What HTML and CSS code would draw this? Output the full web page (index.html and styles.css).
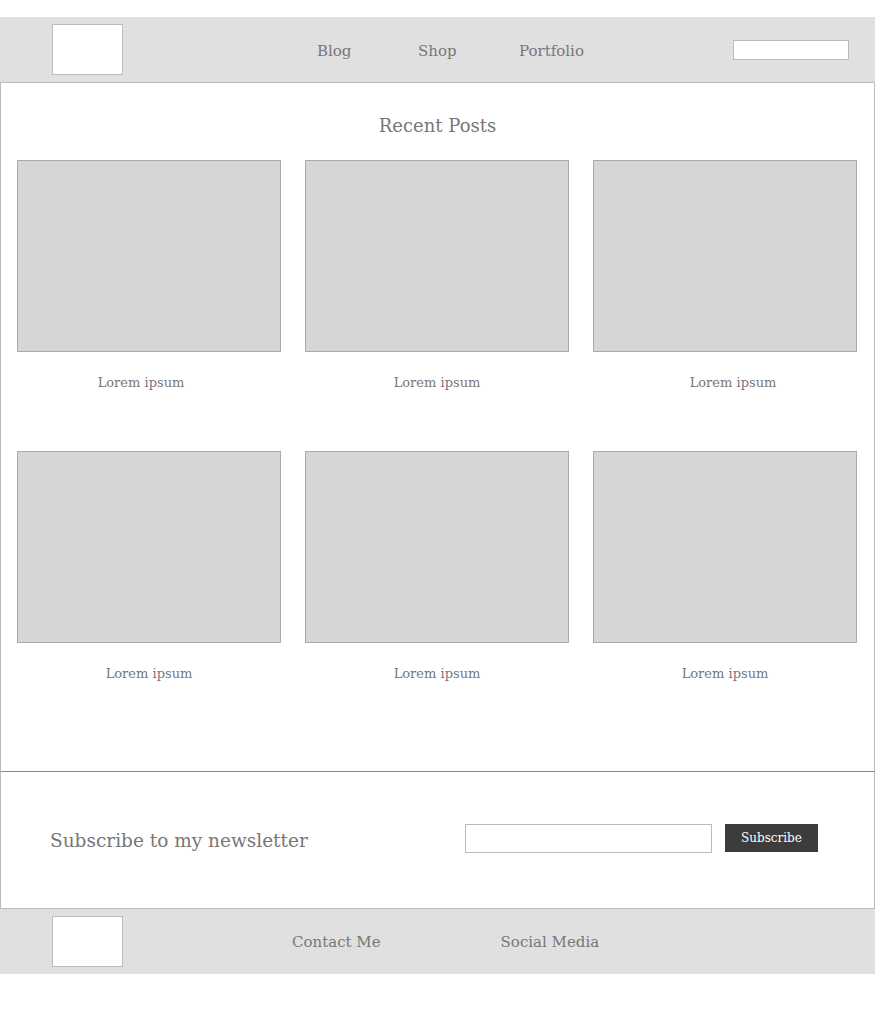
FILE: index.html
```html
<!DOCTYPE html>
<html>
<head>
  <title>Home</title>
  <link rel="stylesheet" href="styles.css">
</head>
<body>
  <header class="top-bar">
    <div class="logo-box"></div>
    <nav class="main-nav">
      <a href="#">Blog</a>
      <a href="#">Shop</a>
      <a href="#">Portfolio</a>
    </nav>
    <input type="text" class="search-box">
  </header>

  <main class="posts">
    <h1>Recent Posts</h1>
    <div class="post-grid">
      <div class="post">
        <div class="thumb"></div>
        <p class="caption shift-left">Lorem ipsum</p>
      </div>
      <div class="post">
        <div class="thumb"></div>
        <p class="caption">Lorem ipsum</p>
      </div>
      <div class="post">
        <div class="thumb"></div>
        <p class="caption shift-right">Lorem ipsum</p>
      </div>
      <div class="post">
        <div class="thumb"></div>
        <p class="caption">Lorem ipsum</p>
      </div>
      <div class="post">
        <div class="thumb"></div>
        <p class="caption">Lorem ipsum</p>
      </div>
      <div class="post">
        <div class="thumb"></div>
        <p class="caption">Lorem ipsum</p>
      </div>
    </div>
  </main>

  <section class="newsletter">
    <h2>Subscribe to my newsletter</h2>
    <form class="news-form">
      <input type="email" class="email-box">
      <button type="button">Subscribe</button>
    </form>
  </section>

  <footer class="bottom-bar">
    <div class="logo-box"></div>
    <a href="#" class="contact">Contact Me</a>
    <a href="#" class="social">Social Media</a>
  </footer>
</body>
</html>
```

FILE: styles.css
```css
* {
  box-sizing: border-box;
}
body {
  margin: 0;
  font-family: "DejaVu Serif", serif;
  color: #777;
  background: #fff;
}
a {
  color: #777;
  text-decoration: none;
}

.top-bar {
  display: flex;
  align-items: center;
  height: 66px;
  margin-top: 17px;
  background-color: #e0e0e0;
  border-bottom: 1px solid #bbb;
}
.logo-box {
  width: 71px;
  height: 51px;
  margin-left: 52px;
  background-color: #fff;
  border: 1px solid #bbb;
}
.main-nav {
  display: flex;
  margin-left: 194px;
  padding-top: 2px;
}
.main-nav a {
  width: 101px;
  font-size: 15px;
}
.search-box {
  margin-left: auto;
  margin-right: 26px;
  width: 116px;
  height: 20px;
  border: 1px solid #bbb;
  background: #fff;
}

.posts {
  border-left: 1px solid #bbb;
  border-right: 1px solid #bbb;
  border-bottom: 1px solid #888;
  padding: 31px 16px 88px;
}
.posts h1 {
  margin: 0 0 22px;
  text-align: center;
  font-size: 18px;
  font-weight: normal;
  line-height: 24px;
}
.post-grid {
  display: grid;
  grid-template-columns: repeat(3, 264px);
  column-gap: 24px;
  row-gap: 59px;
}
.thumb {
  height: 192px;
  background-color: #d6d6d6;
  border: 1px solid #aaa;
}
.caption {
  margin: 22px 0 0;
  text-align: center;
  font-size: 13px;
  line-height: 18px;
}
.shift-left {
  padding-right: 16px;
}
.shift-right {
  padding-left: 16px;
}

.newsletter {
  display: flex;
  align-items: center;
  height: 137px;
  border-left: 1px solid #bbb;
  border-right: 1px solid #bbb;
  border-bottom: 1px solid #bbb;
  padding-left: 49px;
}
.newsletter h2 {
  margin: 0;
  width: 415px;
  font-size: 18.5px;
  font-weight: normal;
}
.news-form {
  display: flex;
  align-items: flex-start;
  gap: 13px;
  margin-bottom: 4px;
}
.email-box {
  width: 247px;
  height: 29px;
  border: 1px solid #bbb;
}
.news-form button {
  height: 28px;
  padding: 0 16px;
  background-color: #3c3c3c;
  color: #fff;
  border: none;
  font-family: "DejaVu Serif", serif;
  font-size: 12px;
}

.bottom-bar {
  display: flex;
  align-items: center;
  height: 65px;
  background-color: #e0e0e0;
}
.bottom-bar .contact {
  margin-left: 169px;
  font-size: 15px;
}
.bottom-bar .social {
  margin-left: 120px;
  font-size: 15px;
}
```
